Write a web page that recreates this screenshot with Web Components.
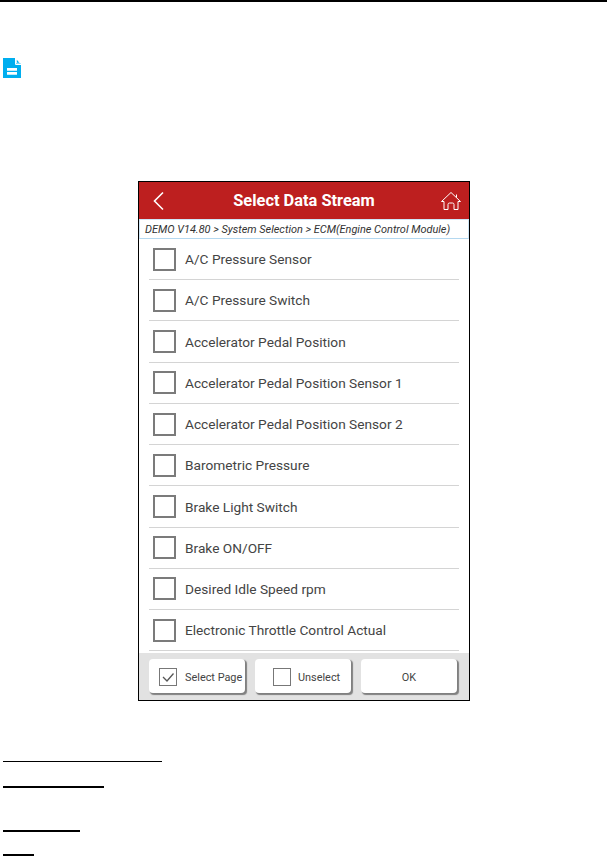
<!DOCTYPE html>
<html><head><meta charset="utf-8">
<style>
html,body{margin:0;padding:0;background:#fff;}
body{width:607px;height:856px;overflow:hidden;font-family:Roboto,sans-serif;}
</style></head><body>
<doc-page></doc-page>
<template id="t-row"><style>
:host{display:flex;align-items:center;height:41.24px;box-sizing:border-box;margin:0 10px;border-bottom:1px solid #d4d4d4;padding-left:4px;gap:9px;color:#444;font:13.7px Roboto,sans-serif;}
.b{width:19px;height:19px;border:2px solid #7b7b7b;flex:none;box-sizing:content-box;}
</style><span class="b"></span><slot></slot></template>
<template id="t-btn"><style>
:host{display:flex;align-items:center;justify-content:center;height:34px;width:96px;box-sizing:border-box;padding-top:2px;background:#fff;border-radius:4px;box-shadow:1.5px 1.5px 1px #808080;color:#444;font:10.9px Roboto,sans-serif;white-space:nowrap;}
</style><slot name="box"></slot><slot></slot></template>
<script>
function shell(id){return document.getElementById(id).content.cloneNode(true);}
class DsRow extends HTMLElement{constructor(){super();this.attachShadow({mode:'open'}).append(shell('t-row'));}}
customElements.define('ds-row',DsRow);
class DsBtn extends HTMLElement{constructor(){super();this.attachShadow({mode:'open'}).append(shell('t-btn'));}}
customElements.define('ds-btn',DsBtn);
class PhoneFrame extends HTMLElement{constructor(){super();const s=this.attachShadow({mode:'open'});
const items=['A/C Pressure Sensor','A/C Pressure Switch','Accelerator Pedal Position','Accelerator Pedal Position Sensor 1','Accelerator Pedal Position Sensor 2','Barometric Pressure','Brake Light Switch','Brake ON/OFF','Desired Idle Speed rpm','Electronic Throttle Control Actual'];
s.innerHTML=`<style>
:host{display:flex;flex-direction:column;width:332px;height:520px;box-sizing:border-box;border:1px solid #000;margin-left:138px;background:#fff;}
header{height:37px;flex:none;background:#bd1f1f;color:#fff;display:flex;align-items:center;justify-content:space-between;padding:0 8px 0 14px;font:bold 16.4px Roboto,sans-serif;}
header svg{display:block;}
header span{padding-left:2px;}
.crumb{height:20px;flex:none;box-sizing:border-box;display:flex;align-items:center;padding-left:5px;font:italic 10.93px Roboto,sans-serif;color:#333;border:1px solid #cfe6f6;border-bottom-color:#b4d8f0;white-space:nowrap;}
.list{flex:1;display:flex;flex-direction:column;min-height:0;}
footer{height:47px;flex:none;box-sizing:border-box;background:#e2e2e2;display:flex;align-items:center;gap:10px;padding:0 10px 1px;}
.cb{margin-right:8px;flex:none;display:block;}
</style>
<header><svg width="12" height="20" viewBox="0 0 12 20"><path d="M10 1.500 1.500 10 10 18.500" fill="none" stroke="#fff" stroke-width="1.6"/></svg><span>Select Data Stream</span>
<svg width="20" height="20" viewBox="0 0 20 20" fill="none" stroke="#fff" stroke-width="1"><path d="M.5 10.500 10 1.500l9.500 9H17v8h-4v-5q0-1.500-1.500-1.500h-3Q7 12 7 13.500v5H3v-8z"/><path d="M15.500 3.500v3"/></svg></header>
<div class="crumb">DEMO V14.80 &gt; System Selection &gt; ECM(Engine Control Module)</div>
<div class="list">${items.map(i=>`<ds-row>${i}</ds-row>`).join('')}</div>
<footer>
<ds-btn style="justify-content:flex-start;padding-left:10px"><svg class="cb" slot="box" width="18" height="18" viewBox="0 0 18 18"><rect x=".5" y=".5" width="17" height="17" fill="none" stroke="#777"/><path d="M4 9l4 4 6.500-7.500" fill="none" stroke="#555" stroke-width="1.300"/></svg>Select Page</ds-btn>
<ds-btn style="justify-content:flex-start;padding-left:18px"><svg class="cb" slot="box" width="18" height="18" viewBox="0 0 18 18" style="margin-right:7px"><rect x=".5" y=".5" width="17" height="17" fill="none" stroke="#777"/></svg>Unselect</ds-btn>
<ds-btn>OK</ds-btn>
</footer>`;}}
customElements.define('phone-frame',PhoneFrame);
class DocPage extends HTMLElement{constructor(){super();const s=this.attachShadow({mode:'open'});
s.innerHTML=`<style>
:host{display:block;width:607px;height:856px;}
.top{height:2px;background:#000;}
.ic{display:block;margin:56px 0 103px 3px;}
.rule{background:#000;margin-left:3px;}
</style>
<div class="top"></div>
<svg class="ic" width="18" height="20" viewBox="0 0 18 20"><path d="M0 0h12l6 6v14H0z" fill="#00aeef"/><path d="M12.500 0v6.500H18" fill="none" stroke="#fff" stroke-width="1"/><path d="M13 0l5 5.500h-5z" fill="#fff"/><path d="M13.800 1.800l2.600 3h-2.600z" fill="#00aeef"/><path d="M4 10h10v2.700H4zM4 14h10v2.700H4z" fill="#fff"/></svg>
<phone-frame></phone-frame>
<div class="rule" style="width:159px;height:1px;margin-top:60px"></div>
<div class="rule" style="width:101px;height:2px;margin-top:24px"></div>
<div class="rule" style="width:77px;height:2px;margin-top:42px"></div>
<div class="rule" style="width:31px;height:2px;margin-top:22px"></div>`;}}
customElements.define('doc-page',DocPage);
</script>
</body></html>
